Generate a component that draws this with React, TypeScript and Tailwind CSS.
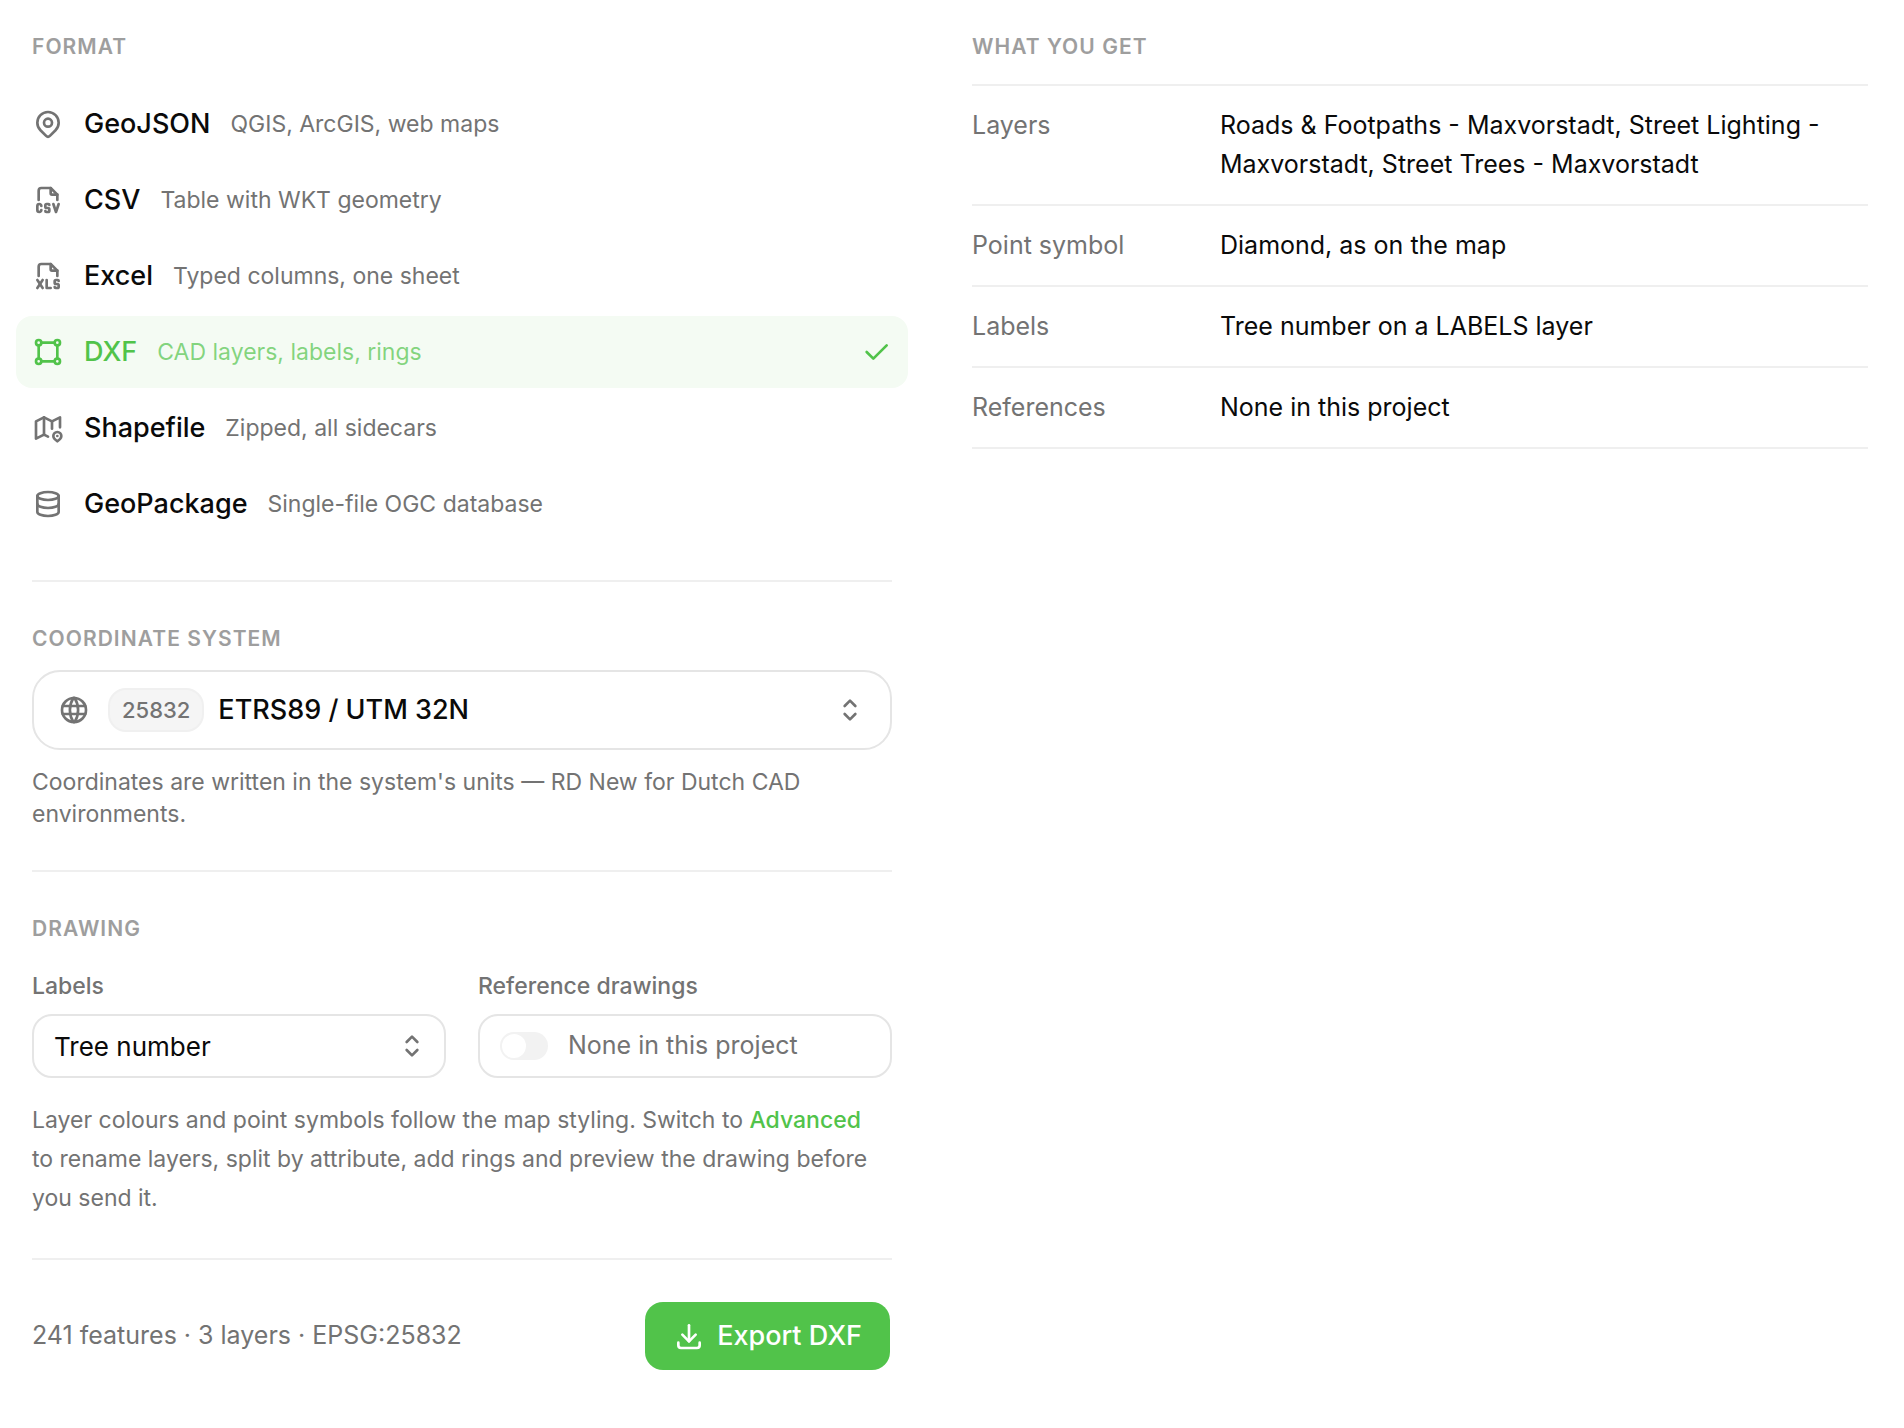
import { useState } from 'react';
import type { ReactNode } from 'react';
import type { IconType } from 'react-icons';
import {
  TbCheck,
  TbDatabase,
  TbDownload,
  TbFileTypeCsv,
  TbFileTypeXls,
  TbMap2,
  TbMapPin,
  TbSelector,
  TbShape,
  TbWorld,
} from 'react-icons/tb';

// ─── Types ────────────────────────────────────────────────────────────────────

type FormatId = 'geojson' | 'csv' | 'excel' | 'dxf' | 'shapefile' | 'geopackage';

// ─── Config ───────────────────────────────────────────────────────────────────

const FORMATS: { id: FormatId; icon: IconType; label: string; hint: string }[] = [
  { id: 'geojson', icon: TbMapPin, label: 'GeoJSON', hint: 'QGIS, ArcGIS, web maps' },
  { id: 'csv', icon: TbFileTypeCsv, label: 'CSV', hint: 'Table with WKT geometry' },
  { id: 'excel', icon: TbFileTypeXls, label: 'Excel', hint: 'Typed columns, one sheet' },
  { id: 'dxf', icon: TbShape, label: 'DXF', hint: 'CAD layers, labels, rings' },
  { id: 'shapefile', icon: TbMap2, label: 'Shapefile', hint: 'Zipped, all sidecars' },
  { id: 'geopackage', icon: TbDatabase, label: 'GeoPackage', hint: 'Single-file OGC database' },
];

const SUMMARY = [
  {
    term: 'Layers',
    value:
      'Roads & Footpaths - Maxvorstadt, Street Lighting - Maxvorstadt, Street Trees - Maxvorstadt',
  },
  { term: 'Point symbol', value: 'Diamond, as on the map' },
  { term: 'Labels', value: 'Tree number on a LABELS layer' },
  { term: 'References', value: 'None in this project' },
];

// ─── Parts ────────────────────────────────────────────────────────────────────

const Heading = ({ children }: { children: ReactNode }) => (
  <h2 className="text-[21px] leading-[34px] font-semibold tracking-wider text-[#9e9e9e] uppercase">
    {children}
  </h2>
);

const FormatList = ({ value, onChange }: { value: FormatId; onChange: (id: FormatId) => void }) => (
  <div role="radiogroup" aria-label="Format" className="-mx-4 mt-6 flex flex-col gap-1">
    {FORMATS.map(({ id, icon: Icon, label, hint }) => {
      const active = id === value;
      return (
        <label
          key={id}
          className={`relative flex h-[72px] cursor-pointer items-center gap-5 rounded-2xl px-4 ${
            active ? 'bg-[#f4fbf3] text-[#51c34a]' : 'text-[#0a0a0a]'
          }`}
        >
          <input
            type="radio"
            name="format"
            className="sr-only"
            checked={active}
            onChange={() => onChange(id)}
          />
          <Icon className={`size-8 shrink-0 ${active ? '' : 'text-[#737373]'}`} />
          <span className="text-[27px] font-medium">{label}</span>
          <span className={`text-[23px] ${active ? 'text-[#51c34a]/70' : 'text-[#737373]'}`}>
            {hint}
          </span>
          {active && <TbCheck className="ml-auto size-8 shrink-0" />}
        </label>
      );
    })}
  </div>
);

// ─── Export panel ─────────────────────────────────────────────────────────────

const App = () => {
  const [format, setFormat] = useState<FormatId>('dxf');
  const [labels, setLabels] = useState('tree-number');

  const formatLabel = FORMATS.find((f) => f.id === format)?.label ?? '';

  return (
    <div className="grid min-h-screen grid-cols-[215fr_224fr] gap-20 bg-white pt-[30px] pr-9 pb-14 pl-8 font-['Inter',sans-serif] text-[#0a0a0a]">
      <main>
        {/* Format */}
        <section className="border-b-2 border-[#efefef] pb-10">
          <Heading>Format</Heading>
          <FormatList value={format} onChange={setFormat} />
        </section>

        {/* Coordinate system */}
        <section className="border-b-2 border-[#efefef] py-10">
          <Heading>Coordinate system</Heading>
          <button
            type="button"
            aria-haspopup="listbox"
            className="mt-[14px] flex h-20 w-full items-center rounded-[28px] border-2 border-[#e5e5e5] px-6"
          >
            <TbWorld className="size-8 text-[#737373]" />
            <span className="ml-[18px] flex h-11 items-center rounded-[18px] border-2 border-[#f0f0f0] bg-[#f5f5f5] px-3 text-[22px] font-medium text-[#737373]">
              25832
            </span>
            <span className="ml-[14px] text-[27px] font-medium">ETRS89 / UTM 32N</span>
            <TbSelector className="ml-auto size-8 text-[#737373]" />
          </button>
          <p className="mt-4 text-[23px] leading-8 text-[#737373]">
            Coordinates are written in the system's units — RD New for Dutch CAD environments.
          </p>
        </section>

        {/* Drawing */}
        <section className="border-b-2 border-[#efefef] py-10">
          <Heading>Drawing</Heading>
          <div className="mt-6 grid grid-cols-2 gap-8">
            <div>
              <label htmlFor="labels" className="block text-[23px] leading-8 font-medium text-[#737373]">
                Labels
              </label>
              <div className="relative mt-3">
                <select
                  id="labels"
                  value={labels}
                  onChange={(e) => setLabels(e.target.value)}
                  className="h-16 w-full appearance-none rounded-[20px] border-2 border-[#e5e5e5] bg-white pr-14 pl-5 text-[26px]"
                >
                  <option value="tree-number">Tree number</option>
                </select>
                <TbSelector className="pointer-events-none absolute top-4 right-[18px] size-8 text-[#737373]" />
              </div>
            </div>
            <div>
              <label
                htmlFor="references"
                className="block text-[23px] leading-8 font-medium text-[#737373]"
              >
                Reference drawings
              </label>
              <div className="mt-3 flex h-16 items-center gap-5 rounded-[20px] border-2 border-[#e5e5e5] px-5">
                <input
                  id="references"
                  type="checkbox"
                  role="switch"
                  disabled
                  className="h-7 w-12 appearance-none rounded-full bg-[#f2f2f2] p-0.5 before:block before:size-6 before:rounded-full before:bg-white"
                />
                <span className="text-[25px] text-[#737373]">None in this project</span>
              </div>
            </div>
          </div>
          <p className="mt-[23px] pr-4 text-[23px] leading-[39px] text-[#737373]">
            Layer colours and point symbols follow the map styling. Switch to{' '}
            <a href="#advanced" className="font-medium text-[#51c34a]">
              Advanced
            </a>{' '}
            to rename layers, split by attribute, add rings and preview the drawing before you send
            it.
          </p>
        </section>

        {/* Footer */}
        <footer className="flex items-center justify-between pt-10">
          <p className="text-[25px] text-[#737373]">241 features · 3 layers · EPSG:25832</p>
          <button
            type="button"
            className="flex h-[72px] items-center gap-3 rounded-[20px] border-2 border-transparent bg-[#51c34a] bg-clip-padding px-7 text-[27px] font-medium text-white"
          >
            <TbDownload className="size-8" />
            Export {formatLabel}
          </button>
        </footer>
      </main>

      <aside>
        <Heading>What you get</Heading>
        <dl className="mt-5 border-t-2 border-[#efefef] text-[25px] leading-[39px]">
          {SUMMARY.map(({ term, value }) => (
            <div
              key={term}
              className="grid grid-cols-[224px_1fr] gap-6 border-b-2 border-[#efefef] py-5"
            >
              <dt className="text-[#737373]">{term}</dt>
              <dd>{value}</dd>
            </div>
          ))}
        </dl>
      </aside>
    </div>
  );
};

export default App;
